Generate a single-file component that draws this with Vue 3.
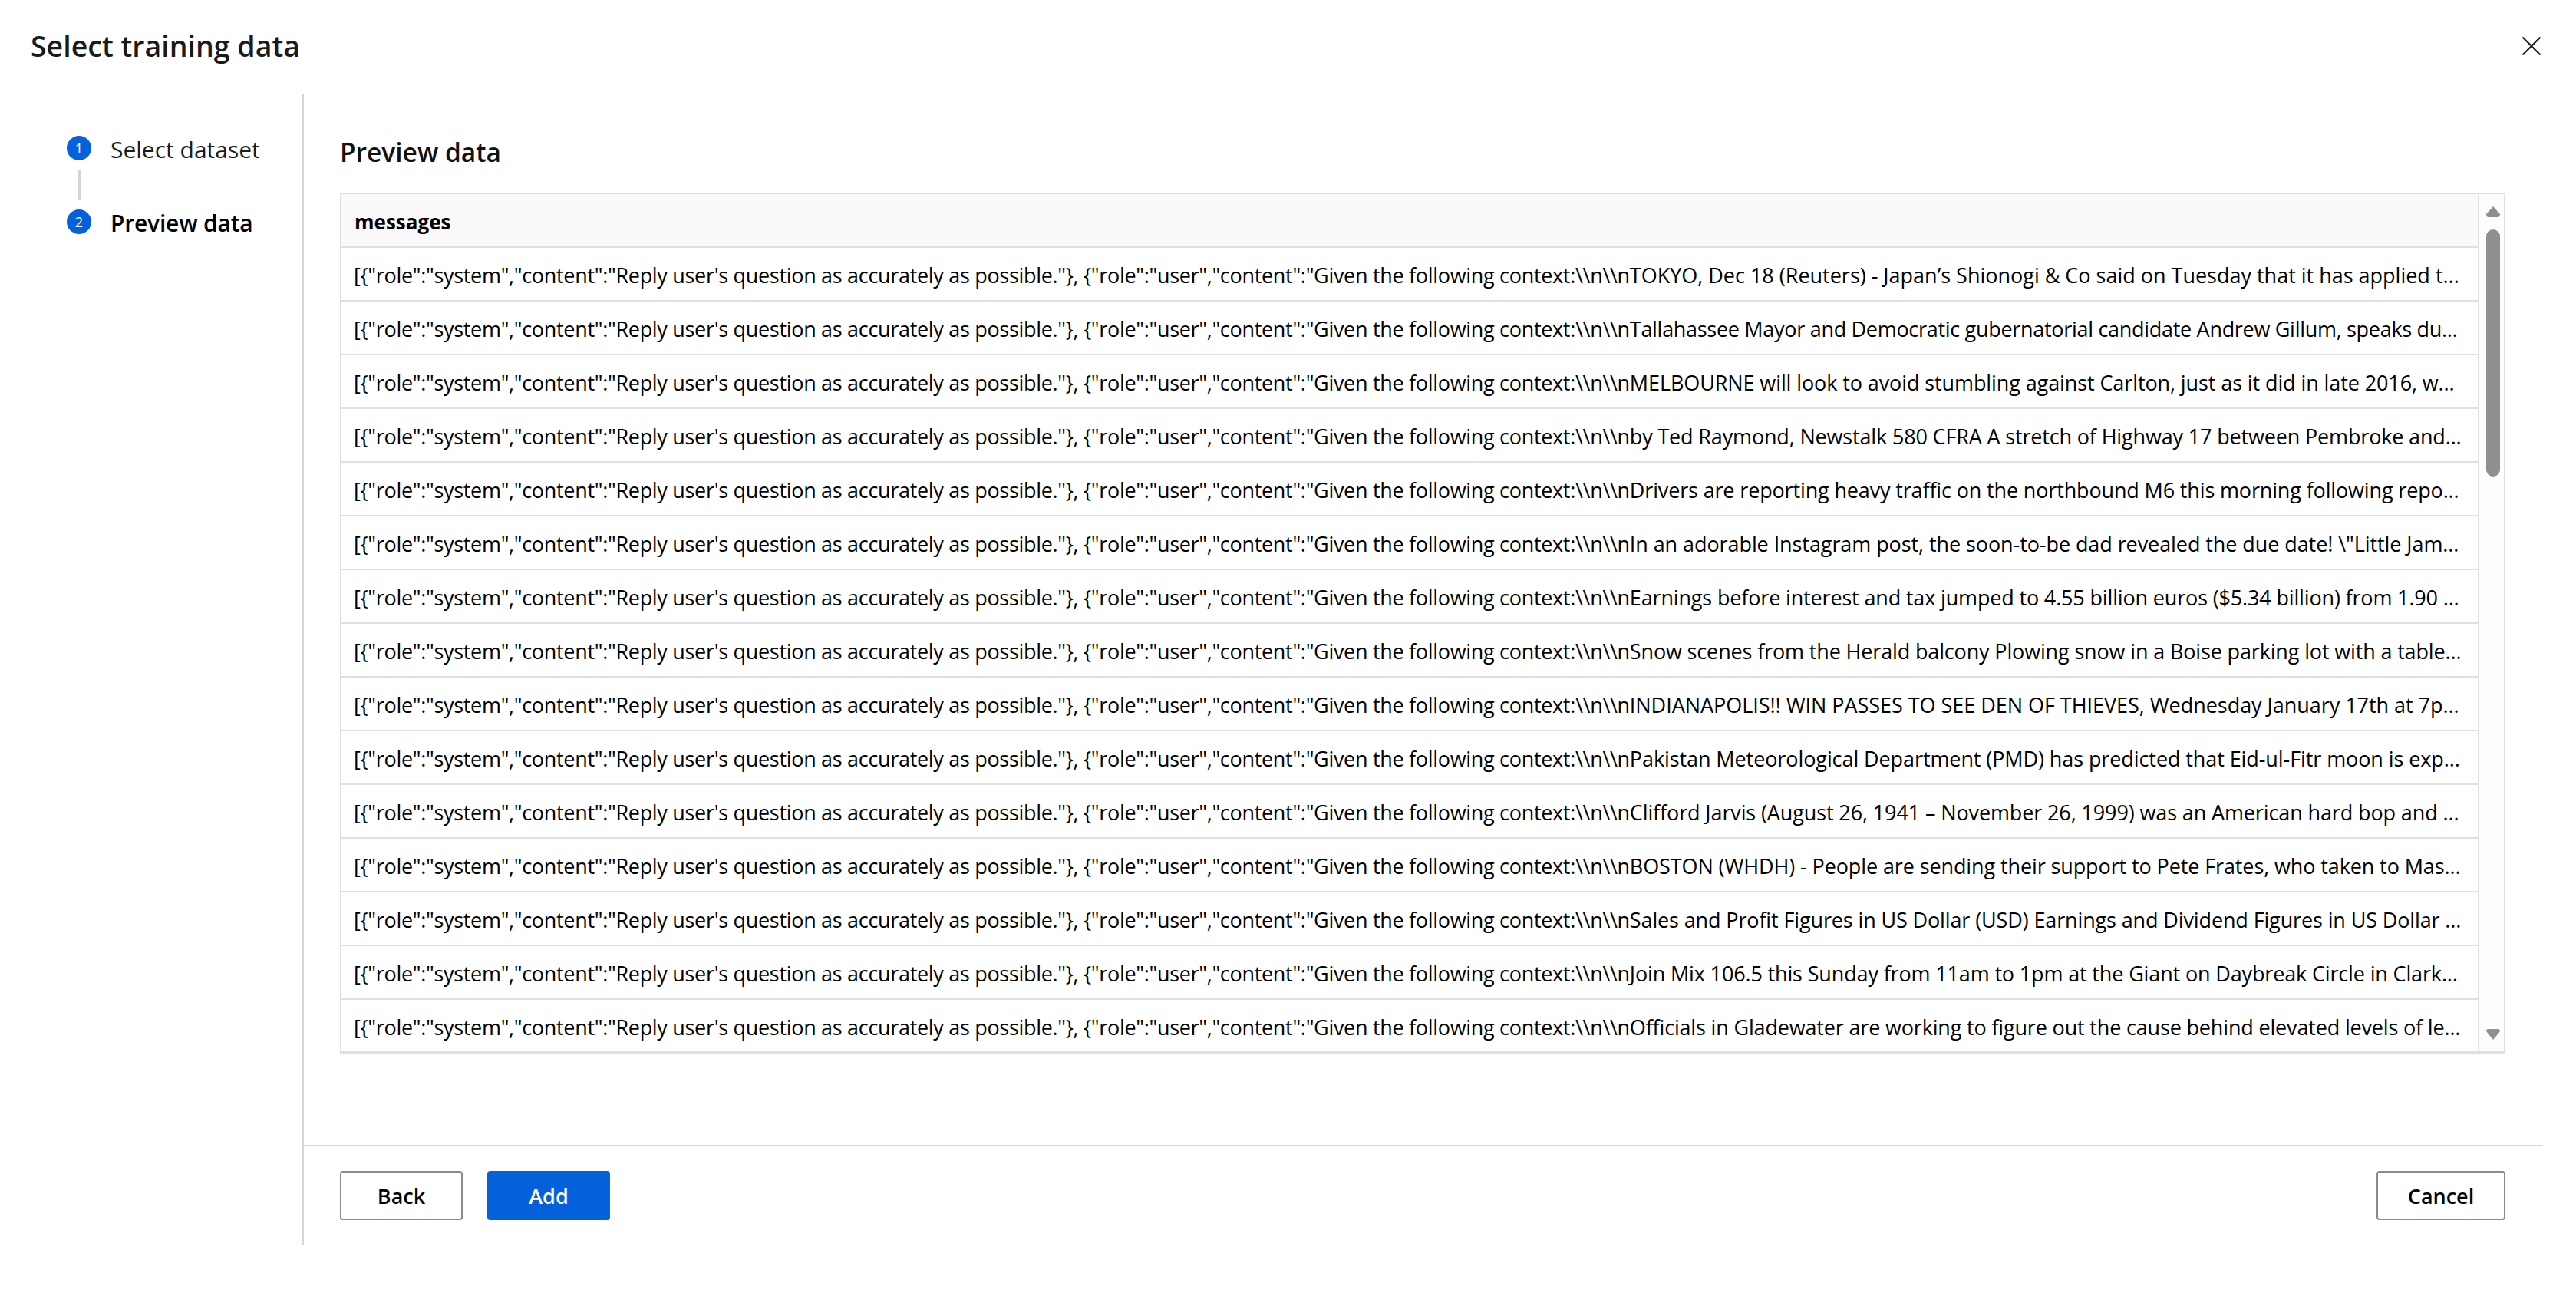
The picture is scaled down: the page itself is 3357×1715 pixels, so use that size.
<script setup>
const prefix = `[{"role":"system","content":"Reply user's question as accurately as possible."}, {"role":"user","content":"Given the following context:\\\\n\\\\n`
const rows = [
  { text: `TOKYO, Dec 18 (Reuters) - Japan’s Shionogi & Co said on Tuesday that it has applied t...`, fit: -0.01 },
  { text: `Tallahassee Mayor and Democratic gubernatorial candidate Andrew Gillum, speaks du...`, fit: -0.3 },
  { text: `MELBOURNE will look to avoid stumbling against Carlton, just as it did in late 2016, w...`, fit: -0.1 },
  { text: `by Ted Raymond, Newstalk 580 CFRA A stretch of Highway 17 between Pembroke and...`, fit: -0.16 },
  { text: `Drivers are reporting heavy traffic on the northbound M6 this morning following repo...`, fit: -0.15 },
  { text: `In an adorable Instagram post, the soon-to-be dad revealed the due date! \\"Little Jam...`, fit: -0.08 },
  { text: `Earnings before interest and tax jumped to 4.55 billion euros ($5.34 billion) from 1.90 ...`, fit: -0.16 },
  { text: `Snow scenes from the Herald balcony Plowing snow in a Boise parking lot with a table...`, fit: -0.15 },
  { text: `INDIANAPOLIS!! WIN PASSES TO SEE DEN OF THIEVES, Wednesday January 17th at 7p...`, fit: -0.04 },
  { text: `Pakistan Meteorological Department (PMD) has predicted that Eid-ul-Fitr moon is exp...`, fit: -0.09 },
  { text: `Clifford Jarvis (August 26, 1941 – November 26, 1999) was an American hard bop and ...`, fit: -0.12 },
  { text: `BOSTON (WHDH) - People are sending their support to Pete Frates, who taken to Mas...`, fit: -0.11 },
  { text: `Sales and Profit Figures in US Dollar (USD) Earnings and Dividend Figures in US Dollar ...`, fit: -0.13 },
  { text: `Join Mix 106.5 this Sunday from 11am to 1pm at the Giant on Daybreak Circle in Clark...`, fit: -0.15 },
  { text: `Officials in Gladewater are working to figure out the cause behind elevated levels of le...`, fit: -0.17 }
]
</script>

<template>
  <div class="dialog">
    <header class="head">
      <h1 class="title">Select training data</h1>
      <svg class="close" viewBox="0 0 24 24" width="24" height="24" aria-label="Close">
        <path d="M0.5 0.5 L23.5 23.5 M23.5 0.5 L0.5 23.5" stroke="#1b1b1b" stroke-width="2" fill="none" />
      </svg>
    </header>
    <div class="body">
      <nav class="steps">
        <div class="step">
          <span class="dot">1</span>
          <span class="label">Select dataset</span>
        </div>
        <div class="link"></div>
        <div class="step">
          <span class="dot">2</span>
          <span class="label strong">Preview data</span>
        </div>
      </nav>
      <main class="main">
        <section class="content">
          <h2 class="heading">Preview data</h2>
          <div class="grid">
            <div class="table">
              <div class="th">messages</div>
              <div v-for="(r, i) in rows" :key="i" class="td">{{ prefix }}<span :style="{ letterSpacing: r.fit + 'px' }">{{ r.text }}</span></div>
            </div>
            <div class="scrollbar">
              <svg width="18" height="14" viewBox="0 0 18 14"><path d="M9 0 L18 10 Q18 14 15 14 L3 14 Q0 14 0 10 Z" fill="#8f8f8f" /></svg>
              <div class="thumb"></div>
              <div class="track"></div>
              <svg width="18" height="14" viewBox="0 0 18 14"><path d="M9 14 L18 3 Q18 0 15 0 L3 0 Q0 0 0 3 Z" fill="#8f8f8f" /></svg>
            </div>
          </div>
        </section>
        <footer class="foot">
          <div class="left">
            <button class="btn back">Back</button>
            <button class="btn primary">Add</button>
          </div>
          <button class="btn cancel">Cancel</button>
        </footer>
      </main>
    </div>
  </div>
</template>

<style>
html, body { margin: 0; background: #fff; }
</style>

<style scoped>
.dialog {
  width: 3357px;
  height: 1715px;
  box-sizing: border-box;
  background: #fff;
  color: #000;
  font-family: "Open Sans", "Noto Sans", sans-serif;
  overflow: hidden;
}
.head {
  height: 122px;
  box-sizing: border-box;
  display: flex;
  justify-content: space-between;
  align-items: flex-start;
  padding: 30px 46px 0 40px;
}
.title {
  margin: 0;
  font-size: 37.5px;
  line-height: 60px;
  font-weight: 600;
  color: #1a1a1a;
}
.close { margin-top: 18px; }
.body { display: flex; height: 1500px; }
.steps {
  width: 394px;
  flex: none;
  box-sizing: border-box;
  padding: 55px 0 0 87px;
}
.step { display: flex; align-items: center; height: 32px; gap: 25px; }
.dot {
  width: 32px;
  height: 32px;
  border-radius: 50%;
  background: #0560dc;
  color: #fff;
  font-size: 18px;
  display: flex;
  align-items: center;
  justify-content: center;
}
.label { font-size: 30px; color: #1c1c1c; white-space: nowrap; padding-top: 3px; }
.label.strong { font-weight: 600; color: #000; letter-spacing: -0.2px; }
.link { width: 4px; height: 40px; margin: 12px 0 12px 14px; background: #d6d6d6; }
.main {
  flex: 1;
  border-left: 2px solid #d6d6d6;
  display: flex;
  flex-direction: column;
  min-width: 0;
  margin-right: 44px;
}
.content { height: 1372px; box-sizing: border-box; padding: 50px 48px 0 47px; border-bottom: 2px solid #d6d6d6; }
.heading {
  margin: 0 0 26px;
  font-size: 33.5px;
  line-height: 53px;
  font-weight: 600;
  color: #111;
}
.grid {
  display: flex;
  height: 1122px;
  box-sizing: border-box;
  border: 2px solid #e0e0e0;
  border-bottom-width: 3px;
}
.table { flex: 1; min-width: 0; }
.th {
  height: 70px;
  box-sizing: border-box;
  padding: 3px 0 0 17px;
  background: #f9f9f9;
  border-bottom: 2px solid #e0e0e0;
  font-size: 26px;
  font-weight: 700;
  line-height: 66px;
}
.td {
  height: 70px;
  box-sizing: border-box;
  padding: 3px 0 0 16px;
  border-bottom: 2px solid #e0e0e0;
  font-size: 27px;
  letter-spacing: -0.31px;
  line-height: 66px;
  white-space: nowrap;
  overflow: hidden;
}
.td:last-child { border-bottom: 0; }
.scrollbar {
  width: 34px;
  flex: none;
  box-sizing: border-box;
  background: #fdfdfd;
  border-left: 2px solid #e0e0e0;
  padding: 16px 6px 15px 9px;
  display: flex;
  flex-direction: column;
}
.thumb { height: 322px; width: 18px; margin-top: 16px; background: #8f8f8f; border-radius: 9px; }
.track { flex: 1; }
.foot {
  flex: 1;
  display: flex;
  justify-content: space-between;
  align-items: flex-start;
  padding: 32px 48px 0 47px;
}
.left { display: flex; gap: 32px; }
.btn {
  height: 64px;
  box-sizing: border-box;
  border: 2px solid #8a8a8a;
  border-radius: 4px;
  background: #fff;
  color: #000;
  font-family: inherit;
  font-size: 27px;
  font-weight: 600;
  padding: 0;
}
.back { width: 160px; }
.cancel { width: 168px; }
.primary { width: 160px; background: #0560dc; border-color: #0560dc; color: #fff; }
</style>
